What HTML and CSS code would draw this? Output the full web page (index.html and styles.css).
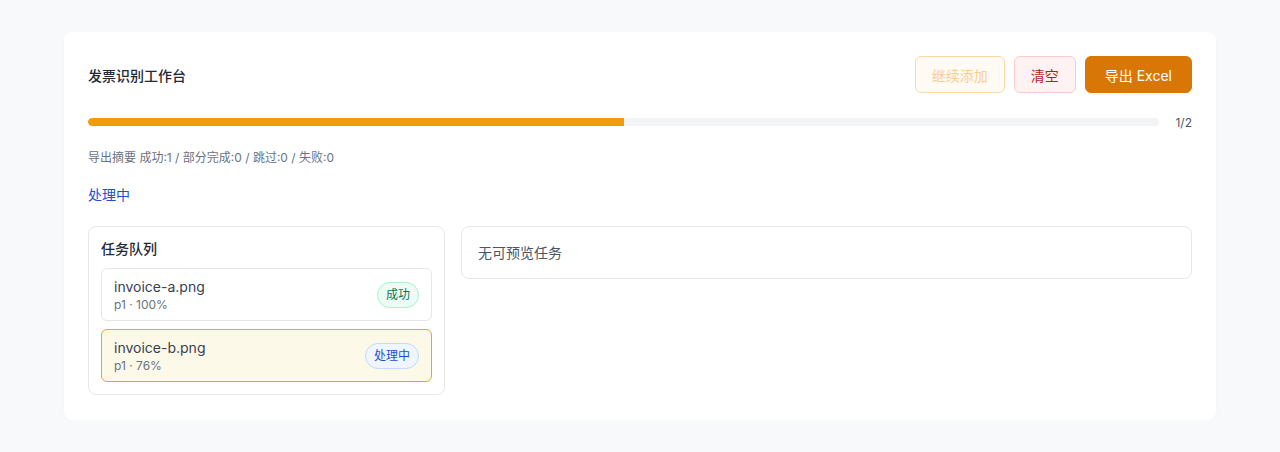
FILE: index.html
```html
<!DOCTYPE html>
<html lang="zh-CN">
<head>
<meta charset="utf-8">
<title>发票识别工作台</title>
<link rel="stylesheet" href="styles.css">
</head>
<body>
<div class="card">
  <div class="header">
    <h1 class="title">发票识别工作台</h1>
    <div class="actions">
      <button class="btn btn-add" disabled>继续添加</button>
      <button class="btn btn-clear">清空</button>
      <button class="btn btn-export">导出 Excel</button>
    </div>
  </div>
  <div class="progress-row">
    <div class="progress"><div class="progress-fill" style="width:50%"></div></div>
    <span class="progress-text">1/2</span>
  </div>
  <div class="summary">导出摘要 成功:1 / 部分完成:0 / 跳过:0 / 失败:0</div>
  <div class="status">处理中</div>
  <div class="grid">
    <div class="queue">
      <div class="queue-title">任务队列</div>
      <div class="task">
        <div class="task-info">
          <div class="task-name">invoice-a.png</div>
          <div class="task-meta">p1 · 100%</div>
        </div>
        <span class="badge badge-ok">成功</span>
      </div>
      <div class="task task-active">
        <div class="task-info">
          <div class="task-name">invoice-b.png</div>
          <div class="task-meta">p1 · 76%</div>
        </div>
        <span class="badge badge-run">处理中</span>
      </div>
    </div>
    <div class="preview">无可预览任务</div>
  </div>
</div>
</body>
</html>
```
FILE: styles.css
```css
* { box-sizing: border-box; }
html, body { margin: 0; padding: 0; }
body {
  background: #f8f9fb;
  font-family: Inter, "Noto Sans CJK SC", sans-serif;
  color: #1f2937;
}
.card {
  width: 1152px;
  margin: 32px auto 0;
  background: #fff;
  border-radius: 8px;
  box-shadow: 0 1px 2px rgba(15, 23, 42, 0.04);
  padding: 24px 24px 25px;
}
.header {
  display: flex;
  align-items: center;
  justify-content: space-between;
  height: 37px;
}
.title {
  margin: 0;
  font-size: 14px;
  font-weight: 500;
  color: #1f2937;
}
.actions { display: flex; gap: 9px; }
.btn {
  height: 37px;
  padding: 0 16px;
  border-radius: 6px;
  font-family: inherit;
  font-size: 14px;
  border: 1px solid transparent;
  cursor: pointer;
}
.btn-add {
  background: #fffbf4;
  border-color: #fcd9a4;
  color: #f9cd8f;
  cursor: not-allowed;
}
.btn-clear {
  background: #fef2f2;
  border-color: #fecaca;
  color: #b91c1c;
}
.btn-export {
  background: #d97706;
  border-color: #d97706;
  color: #fff;
  padding: 0 19px;
}
.progress-row {
  display: flex;
  align-items: center;
  gap: 16px;
  margin-top: 21px;
  height: 16px;
}
.progress {
  flex: 1;
  height: 8px;
  background: #f3f4f6;
  border-radius: 999px;
  overflow: hidden;
}
.progress-fill {
  height: 100%;
  background: #f39c0b;
  border-radius: 999px 0 0 999px;
}
.progress-text {
  font-size: 12px;
  color: #4b5563;
}
.summary {
  margin-top: 19px;
  font-size: 12px;
  line-height: 18px;
  color: #6b7280;
}
.status {
  margin-top: 17px;
  font-size: 14px;
  line-height: 22px;
  color: #1d4ed8;
}
.grid {
  display: grid;
  grid-template-columns: 357px 1fr;
  gap: 16px;
  align-items: start;
  margin-top: 20px;
}
.queue {
  border: 1px solid #e5e7eb;
  border-radius: 8px;
  padding: 12px;
  display: flex;
  flex-direction: column;
  gap: 8px;
}
.queue-title {
  font-size: 14px;
  font-weight: 500;
  line-height: 20px;
  color: #1f2937;
  margin-bottom: 1px;
}
.task {
  display: flex;
  align-items: center;
  justify-content: space-between;
  border: 1px solid #e5e7eb;
  border-radius: 6px;
  padding: 8px 12px;
  height: 53px;
}
.task-active {
  background: #fdf9e9;
  border-color: #f0a326;
}
.task-name {
  font-size: 14px;
  line-height: 20px;
  color: #374151;
}
.task-meta {
  font-size: 12px;
  line-height: 16px;
  color: #6b7280;
}
.badge {
  font-size: 12px;
  line-height: 16px;
  padding: 4px 8px;
  border-radius: 999px;
  border: 1px solid transparent;
}
.badge-ok {
  background: #ecfdf5;
  border-color: #a7f3d0;
  color: #047857;
}
.badge-run {
  background: #eff6ff;
  border-color: #bfdbfe;
  color: #1d4ed8;
}
.preview {
  border: 1px solid #e5e7eb;
  border-radius: 8px;
  padding: 16px;
  font-size: 14px;
  line-height: 20px;
  color: #4b5563;
  height: 53px;
}
```
